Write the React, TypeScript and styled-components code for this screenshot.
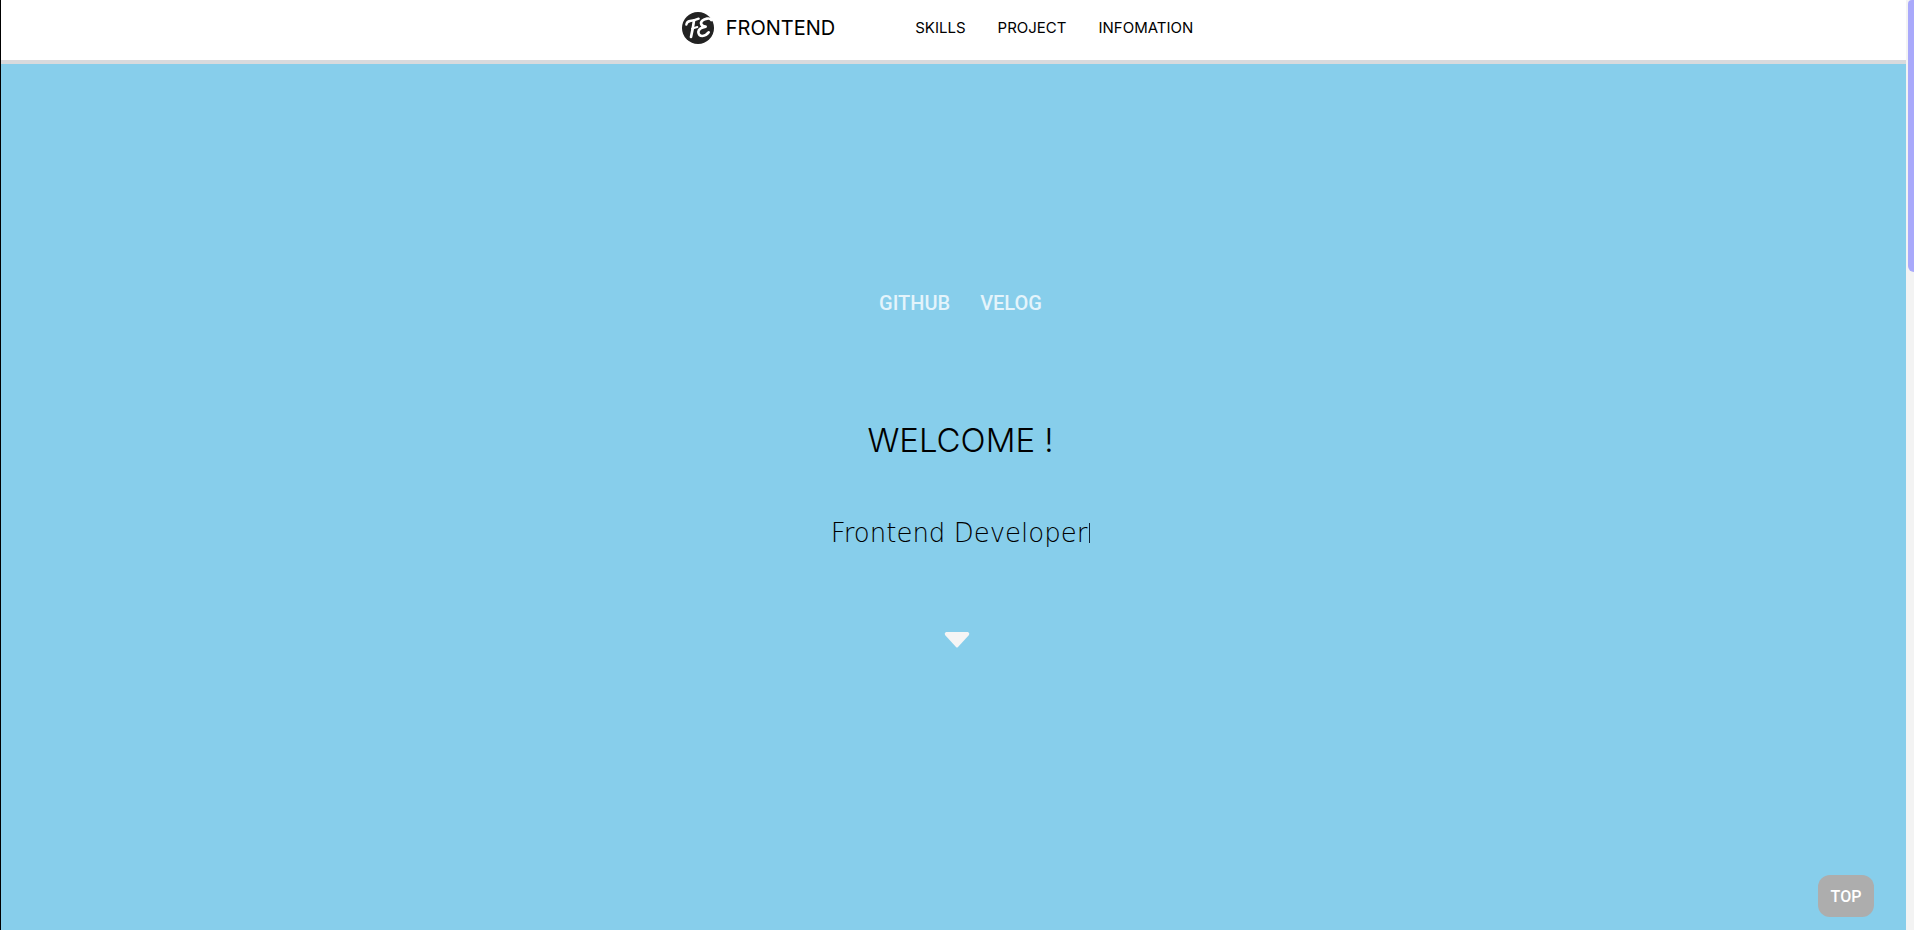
import React from 'react';
import styled, { createGlobalStyle } from 'styled-components';

const GlobalStyle = createGlobalStyle`
  * { box-sizing: border-box; }
  body { margin: 0; background: #87ceeb; font-family: Inter, "Liberation Sans", sans-serif; color: #000; }
  a { color: inherit; text-decoration: none; }
`;

const Page = styled.div`
  display: flex;
  min-height: 100vh;
  border-left: 1px solid #000;
`;

const Content = styled.div`
  flex: 1;
  display: flex;
  flex-direction: column;
`;

const Header = styled.header`
  display: flex;
  justify-content: center;
  height: 64px;
  padding-bottom: 4px;
  background: #fff;
  border-bottom: 4px solid #d8dadd;
`;

const Brand = styled.a`
  display: flex;
  align-items: center;
  gap: 12px;
  margin-right: 80px;
  font-size: 20px;
  line-height: 24px;
`;

const Nav = styled.nav`
  display: flex;
  align-items: center;
`;

const NavLink = styled.a`
  margin-right: 32px;
  font-size: 15px;
  line-height: 24px;
`;

const Hero = styled.main`
  flex: 1;
  display: flex;
  flex-direction: column;
  align-items: center;
  padding: 224px 0 0 14px;
  background: #87ceeb;
`;

const Links = styled.div`
  display: flex;
  gap: 30px;
  font-family: Roboto, sans-serif;
  font-size: 20px;
  line-height: 30px;
  font-weight: 500;
  color: #e4f4fb;
`;

const Title = styled.h1`
  margin: 100px 0 0;
  font-size: 33px;
  line-height: 44px;
  font-weight: 300;
`;

const Role = styled.p`
  display: flex;
  align-items: center;
  margin: 54px 0 0;
  font-family: "DejaVu Sans", sans-serif;
  font-size: 26px;
  line-height: 34px;
  font-weight: 200;
`;

const Caret = styled.span`
  width: 1px;
  height: 20px;
  margin-left: 2px;
  background: #123;
`;

const ScrollDown = styled.button`
  display: flex;
  margin: 82px 8px 0 0;
  padding: 0;
  border: 0;
  background: none;
`;

const TopButton = styled.button`
  position: fixed;
  right: 40px;
  bottom: 13px;
  width: 56px;
  height: 42px;
  padding: 0;
  border: 0;
  border-radius: 12px;
  background: #adadad;
  color: #fff;
  font-family: Roboto, sans-serif;
  font-size: 16px;
  font-weight: 500;
`;

const Track = styled.div`
  width: 8px;
  padding-left: 2px;
  background: #f3f3f3;
`;

const Thumb = styled.div`
  height: 272px;
  border-radius: 4px 0 0 6px;
  background: #a9a9fb;
`;

const Logo = () => (
  <svg width="32" height="32" viewBox="0 0 96 96" aria-hidden="true">
    <circle cx="48" cy="48" r="48" fill="#222" />
    <g fill="none" stroke="#fff" strokeLinecap="round" strokeLinejoin="round">
      <path strokeWidth="7" d="M13 38Q14 29 24 27Q37 25 50 20" />
      <path strokeWidth="8" d="M36 26Q33 49 27 75" />
      <path strokeWidth="6" d="M30 50L46 45" />
      <path strokeWidth="8" d="M88 24Q84 18 75 20Q58 24 57 33Q58 43 71 44Q50 48 49 60Q50 72 61 72Q73 71 80 61" />
    </g>
  </svg>
);

export default function App() {
  return (
    <>
      <GlobalStyle />
      <Page>
        <Content>
          <Header>
            <Brand href="#"><Logo />FRONTEND</Brand>
            <Nav>
              <NavLink href="#skills">SKILLS</NavLink>
              <NavLink href="#project">PROJECT</NavLink>
              <NavLink href="#infomation">INFOMATION</NavLink>
            </Nav>
          </Header>
          <Hero>
            <Links>
              <a href="#github">GITHUB</a>
              <a href="#velog">VELOG</a>
            </Links>
            <Title>WELCOME !</Title>
            <Role>Frontend Developer<Caret /></Role>
            <ScrollDown aria-label="Scroll down">
              <svg width="26" height="16" viewBox="0 0 26 16" aria-hidden="true">
                <path d="M2 0H24Q26 1 25 3L14 15Q13 16 12 15L1 3Q0 1 2 0Z" fill="#f5f5f5" />
              </svg>
            </ScrollDown>
          </Hero>
        </Content>
        <Track><Thumb /></Track>
      </Page>
      <TopButton>TOP</TopButton>
    </>
  );
}
